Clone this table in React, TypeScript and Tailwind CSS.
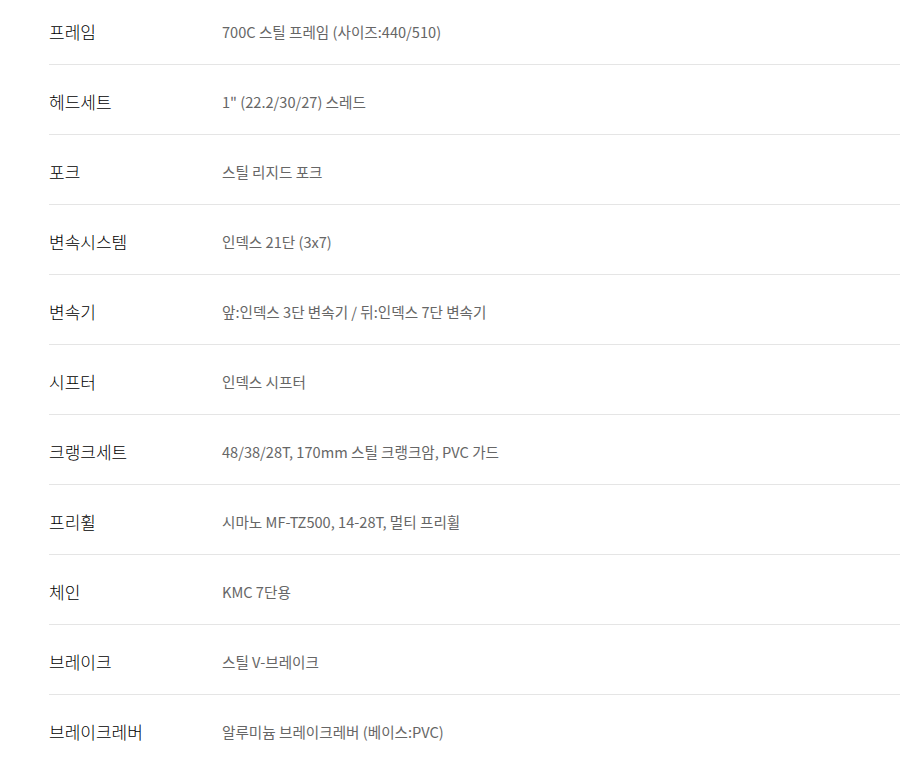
import React from 'react';

const specs: [string, string][] = [
  ['프레임', '700C 스틸 프레임 (사이즈:440/510)'],
  ['헤드세트', '1" (22.2/30/27) 스레드'],
  ['포크', '스틸 리지드 포크'],
  ['변속시스템', '인덱스 21단 (3x7)'],
  ['변속기', '앞:인덱스 3단 변속기 / 뒤:인덱스 7단 변속기'],
  ['시프터', '인덱스 시프터'],
  ['크랭크세트', '48/38/28T, 170mm 스틸 크랭크암, PVC 가드'],
  ['프리휠', '시마노 MF-TZ500, 14-28T, 멀티 프리휠'],
  ['체인', 'KMC 7단용'],
  ['브레이크', '스틸 V-브레이크'],
  ['브레이크레버', '알루미늄 브레이크레버 (베이스:PVC)'],
];

export default function App() {
  return (
    <div className="h-[764px] overflow-hidden bg-white pl-[49px] font-['Noto_Sans_CJK_KR','Noto_Sans',sans-serif]">
      <dl className="-mt-[5px]">
        {specs.map(([label, value]) => (
          <div key={label} className="flex h-[70px] items-center border-b border-[#e5e5e5] pt-[4px]">
            <dt className="w-[173px] shrink-0 text-[17px] font-light text-black">{label}</dt>
            <dd className="text-[14.6px] font-normal text-[#666]">{value}</dd>
          </div>
        ))}
      </dl>
    </div>
  );
}
